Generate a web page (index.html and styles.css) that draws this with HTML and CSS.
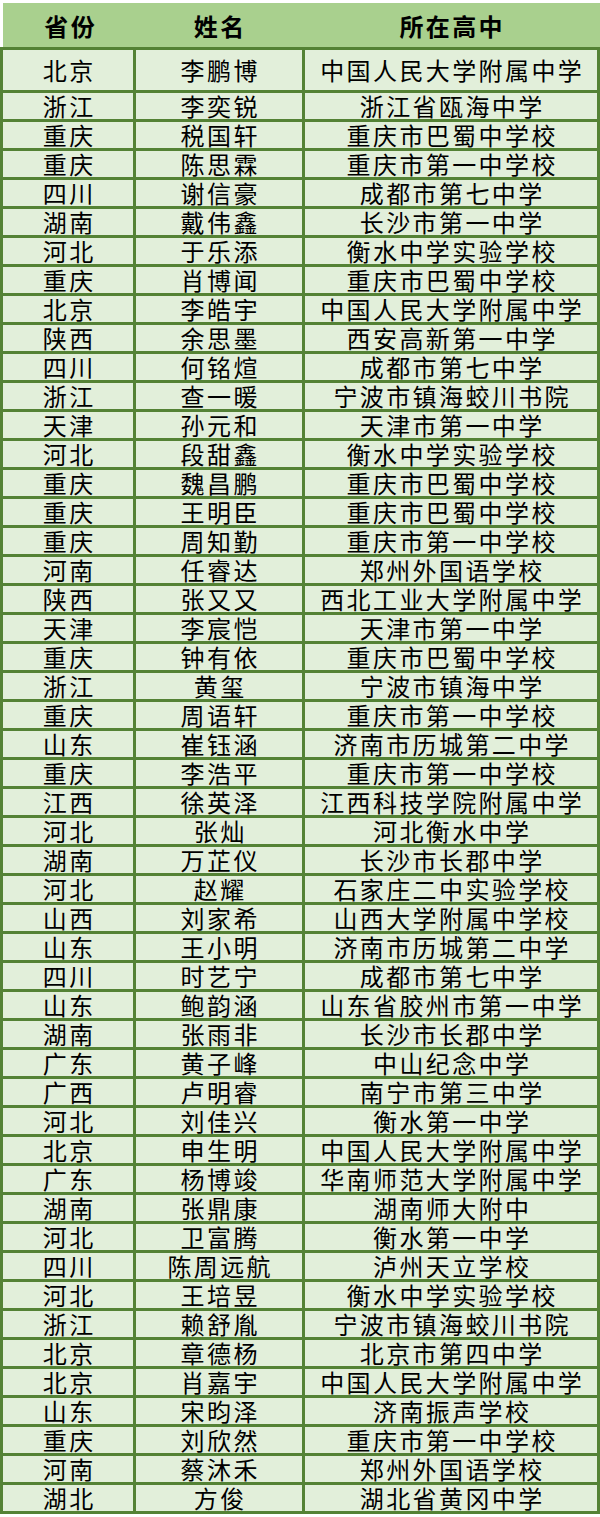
FILE: index.html
```html
<!DOCTYPE html>
<html lang="zh">
<head>
<meta charset="utf-8">
<title>名单</title>
<link rel="stylesheet" href="styles.css">
</head>
<body>
<div class="sheet">
  <div class="head">
    <div class="hcell">省份</div>
    <div class="hcell">姓名</div>
    <div class="hcell">所在高中</div>
  </div>
  <div class="body">
    <div class="cell">北京</div><div class="cell">李鹏博</div><div class="cell">中国人民大学附属中学</div>
    <div class="cell">浙江</div><div class="cell">李奕锐</div><div class="cell">浙江省瓯海中学</div>
    <div class="cell">重庆</div><div class="cell">税国轩</div><div class="cell">重庆市巴蜀中学校</div>
    <div class="cell">重庆</div><div class="cell">陈思霖</div><div class="cell">重庆市第一中学校</div>
    <div class="cell">四川</div><div class="cell">谢信豪</div><div class="cell">成都市第七中学</div>
    <div class="cell">湖南</div><div class="cell">戴伟鑫</div><div class="cell">长沙市第一中学</div>
    <div class="cell">河北</div><div class="cell">于乐添</div><div class="cell">衡水中学实验学校</div>
    <div class="cell">重庆</div><div class="cell">肖博闻</div><div class="cell">重庆市巴蜀中学校</div>
    <div class="cell">北京</div><div class="cell">李皓宇</div><div class="cell">中国人民大学附属中学</div>
    <div class="cell">陕西</div><div class="cell">余思墨</div><div class="cell">西安高新第一中学</div>
    <div class="cell">四川</div><div class="cell">何铭煊</div><div class="cell">成都市第七中学</div>
    <div class="cell">浙江</div><div class="cell">查一暖</div><div class="cell">宁波市镇海蛟川书院</div>
    <div class="cell">天津</div><div class="cell">孙元和</div><div class="cell">天津市第一中学</div>
    <div class="cell">河北</div><div class="cell">段甜鑫</div><div class="cell">衡水中学实验学校</div>
    <div class="cell">重庆</div><div class="cell">魏昌鹏</div><div class="cell">重庆市巴蜀中学校</div>
    <div class="cell">重庆</div><div class="cell">王明臣</div><div class="cell">重庆市巴蜀中学校</div>
    <div class="cell">重庆</div><div class="cell">周知勤</div><div class="cell">重庆市第一中学校</div>
    <div class="cell">河南</div><div class="cell">任睿达</div><div class="cell">郑州外国语学校</div>
    <div class="cell">陕西</div><div class="cell">张又又</div><div class="cell">西北工业大学附属中学</div>
    <div class="cell">天津</div><div class="cell">李宸恺</div><div class="cell">天津市第一中学</div>
    <div class="cell">重庆</div><div class="cell">钟有依</div><div class="cell">重庆市巴蜀中学校</div>
    <div class="cell">浙江</div><div class="cell">黄玺</div><div class="cell">宁波市镇海中学</div>
    <div class="cell">重庆</div><div class="cell">周语轩</div><div class="cell">重庆市第一中学校</div>
    <div class="cell">山东</div><div class="cell">崔钰涵</div><div class="cell">济南市历城第二中学</div>
    <div class="cell">重庆</div><div class="cell">李浩平</div><div class="cell">重庆市第一中学校</div>
    <div class="cell">江西</div><div class="cell">徐英泽</div><div class="cell">江西科技学院附属中学</div>
    <div class="cell">河北</div><div class="cell">张灿</div><div class="cell">河北衡水中学</div>
    <div class="cell">湖南</div><div class="cell">万芷仪</div><div class="cell">长沙市长郡中学</div>
    <div class="cell">河北</div><div class="cell">赵耀</div><div class="cell">石家庄二中实验学校</div>
    <div class="cell">山西</div><div class="cell">刘家希</div><div class="cell">山西大学附属中学校</div>
    <div class="cell">山东</div><div class="cell">王小明</div><div class="cell">济南市历城第二中学</div>
    <div class="cell">四川</div><div class="cell">时艺宁</div><div class="cell">成都市第七中学</div>
    <div class="cell">山东</div><div class="cell">鲍韵涵</div><div class="cell">山东省胶州市第一中学</div>
    <div class="cell">湖南</div><div class="cell">张雨非</div><div class="cell">长沙市长郡中学</div>
    <div class="cell">广东</div><div class="cell">黄子峰</div><div class="cell">中山纪念中学</div>
    <div class="cell">广西</div><div class="cell">卢明睿</div><div class="cell">南宁市第三中学</div>
    <div class="cell">河北</div><div class="cell">刘佳兴</div><div class="cell">衡水第一中学</div>
    <div class="cell">北京</div><div class="cell">申生明</div><div class="cell">中国人民大学附属中学</div>
    <div class="cell">广东</div><div class="cell">杨博竣</div><div class="cell">华南师范大学附属中学</div>
    <div class="cell">湖南</div><div class="cell">张鼎康</div><div class="cell">湖南师大附中</div>
    <div class="cell">河北</div><div class="cell">卫富腾</div><div class="cell">衡水第一中学</div>
    <div class="cell">四川</div><div class="cell">陈周远航</div><div class="cell">泸州天立学校</div>
    <div class="cell">河北</div><div class="cell">王培昱</div><div class="cell">衡水中学实验学校</div>
    <div class="cell">浙江</div><div class="cell">赖舒胤</div><div class="cell">宁波市镇海蛟川书院</div>
    <div class="cell">北京</div><div class="cell">章德杨</div><div class="cell">北京市第四中学</div>
    <div class="cell">北京</div><div class="cell">肖嘉宇</div><div class="cell">中国人民大学附属中学</div>
    <div class="cell">山东</div><div class="cell">宋昀泽</div><div class="cell">济南振声学校</div>
    <div class="cell">重庆</div><div class="cell">刘欣然</div><div class="cell">重庆市第一中学校</div>
    <div class="cell">河南</div><div class="cell">蔡沐禾</div><div class="cell">郑州外国语学校</div>
    <div class="cell">湖北</div><div class="cell">方俊</div><div class="cell">湖北省黄冈中学</div>
  </div>
</div>
</body>
</html>
```

FILE: styles.css
```css
html, body {
  margin: 0;
  padding: 0;
  background: #ffffff;
}

.sheet {
  width: 600px;
  padding-top: 3px;
  font-family: "Noto Sans CJK SC", "Noto Sans", sans-serif;
  color: #000;
}

.head {
  margin-left: 3px;
  height: 44px;
  background: #a9d08e;
  display: grid;
  grid-template-columns: 133px 166px 1fr;
}

.hcell {
  display: flex;
  align-items: center;
  justify-content: center;
  font-size: 24px;
  font-weight: 700;
  letter-spacing: 2.4px;
  padding-left: 2.4px;
  padding-top: 1px;
}

.body {
  background: #548235;
  padding: 3px;
  display: grid;
  grid-template-columns: 130px 166px 1fr;
  grid-template-rows: 40px;
  grid-auto-rows: 26px;
  gap: 3px;
}

.cell {
  background: #e2efda;
  display: flex;
  align-items: center;
  justify-content: center;
  font-size: 24px;
  line-height: 26px;
  letter-spacing: 2.4px;
  padding-left: 2.4px;
  white-space: nowrap;
}
```
